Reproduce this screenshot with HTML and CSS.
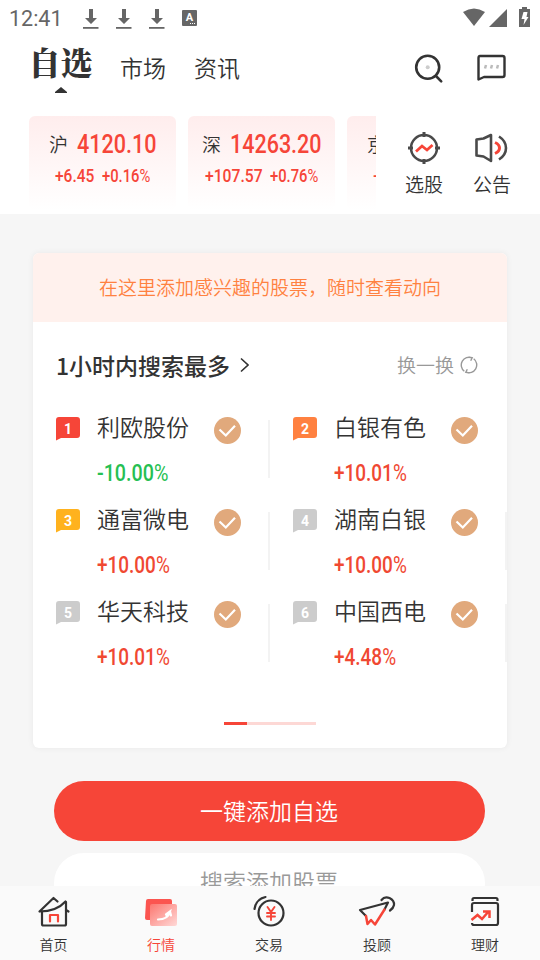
FILE: index.html
```html
<!DOCTYPE html>
<html lang="zh-CN">
<head>
<meta charset="utf-8">
<title>自选</title>
<link rel="stylesheet" href="styles.css">
</head>
<body>
<svg class="defs" width="0" height="0">
  <symbol id="dl" viewBox="0 0 16 20"><path d="M6 0h4v9h4l-6 6-6-6h4z"/><path d="M0 18h15.500v1.800H0z"/></symbol>
  <symbol id="flag" viewBox="0 0 24 24"><path d="M3 0h18a3 3 0 0 1 3 3v15a3 3 0 0 1-3 3H5l-5 2.500V3a3 3 0 0 1 3-3z"/></symbol>
  <symbol id="check" viewBox="0 0 27 27"><circle cx="13.500" cy="13.500" r="13.500" fill="#e1a97c"/><path d="M5.500 12.500l6.300 6 9.200-9.700" fill="none" stroke="#fff" stroke-width="2.200"/></symbol>
</svg>
<div class="screen">
  <header class="top">
    <div class="status">
      <span class="clock">12:41</span>
      <svg class="dl" width="16" height="20"><use href="#dl"/></svg>
      <svg class="dl" width="16" height="20"><use href="#dl"/></svg>
      <svg class="dl" width="16" height="20"><use href="#dl"/></svg>
      <span class="lang">A<i></i></span>
      <span class="grow"></span>
      <svg width="71" height="22" viewBox="0 0 71 22" fill="#666">
        <path d="M3 5Q14-2 25 5L14 19z"/><path d="M47 2v18H29z"/>
        <path d="M59 2h3V0h5v2h3v18H59z"/><path d="M63.500 5h4l-1 5h2l-5 8 1-6h-3z" fill="#fff"/>
      </svg>
    </div>
    <div class="tabs">
      <div class="tab active"><span>自选</span><svg width="12" height="6" viewBox="0 0 12 6"><path d="M6 0l6 5v1H0V5z" fill="#333"/></svg></div>
      <div class="tab second">市场</div>
      <div class="tab third">资讯</div>
      <span class="grow"></span>
      <svg class="search" width="30" height="30" viewBox="0 0 30 30" fill="none" stroke="#333" stroke-width="2.600" stroke-linecap="round"><circle cx="13.700" cy="13.200" r="11.500"/><path d="M22 22l5.200 5.300"/><circle cx="13.700" cy="13.200" r="2" fill="#ccc" stroke="none"/></svg>
      <svg class="chat" width="30" height="28" viewBox="0 0 30 28" fill="none" stroke="#333" stroke-width="2.400"><path d="M4 2h22.500q2 0 2 2v17q0 2-2 2H8l-5.500 2.500V4q0-2 1.500-2z" stroke-linejoin="round"/><path d="M9 14.500l1-3.500M15 14.500l1-3.500M21 14.500l1-3.500" stroke="#bbb" stroke-width="2.500"/></svg>
    </div>
    <div class="market">
      <div class="indices">
        <div class="index">
          <div class="line"><span class="mk">沪</span><b style="width:79px"><span style="transform:scaleX(.83)">4120.10</span></b></div>
          <div class="sub"><b style="width:39px"><span style="transform:scaleX(.86)">+6.45</span></b><b style="width:48px"><span style="transform:scaleX(.82)">+0.16<em>%</em></span></b></div>
        </div>
        <div class="index">
          <div class="line"><span class="mk">深</span><b style="width:91px"><span style="transform:scaleX(.827)">14263.20</span></b></div>
          <div class="sub"><b style="width:57px"><span style="transform:scaleX(.87)">+107.57</span></b><b style="width:48px"><span style="transform:scaleX(.82)">+0.76<em>%</em></span></b></div>
        </div>
        <div class="index cut">
          <div class="line"><span class="mk">京</span></div>
          <div class="sub"><b><span>-</span></b></div>
        </div>
      </div>
      <div class="tool pick">
        <svg width="34" height="34" viewBox="0 0 34 34" fill="none" stroke="#4a4a4a" stroke-width="2.500"><circle cx="17" cy="17" r="13"/><path d="M17 1v5M17 28v5M1 17h5M28 17h5" stroke-width="3"/><path d="M9 20.500l6-5.500 5 4 5.500-5" stroke="#f64538" stroke-width="2.800"/></svg>
        <span>选股</span>
      </div>
      <div class="tool horn">
        <svg width="34" height="34" viewBox="0 0 34 34" fill="none" stroke="#4a4a4a" stroke-width="2.600"><path d="M2.500 8.500l7-1L17 4v26l-7.500-4.500-7-1z" stroke-linejoin="round"/><path d="M25 5.500q7 4.500 7 11.500t-7 11.500"/><path d="M21 11.500q4.500 2 4.500 5.500T21 22.500" stroke="#f64538" stroke-width="3"/></svg>
        <span>公告</span>
      </div>
    </div>
  </header>

  <main class="main">
    <section class="card">
      <div class="banner">在这里添加感兴趣的股票，随时查看动向</div>
      <div class="head">
        <h2>1小时内搜索最多</h2>
        <svg width="9" height="16" viewBox="0 0 9 16" fill="none" stroke="#333" stroke-width="1.600"><path d="M1 1.500l7 6.500-7 6.500"/></svg>
        <span class="grow"></span>
        <span class="swap">换一换</span>
        <svg width="18" height="18" viewBox="0 0 18 18" fill="none" stroke="#999" stroke-width="1.400"><path d="M4.300 15.200A7.800 7.800 0 0 1 12 1.800M13.700 2.800A7.800 7.800 0 0 1 6 16.200M8.500 1l3.700.8-1.500 3M9.500 17l-3.700-.8 1.500-3"/></svg>
      </div>
      <div class="stocks">
        <div class="stock"><div class="badge c1"><svg><use href="#flag"/></svg><span>1</span></div><div class="info"><div>利欧股份</div><p class="down"><span>-10.00<em>%</em></span></p></div><svg class="check"><use href="#check"/></svg><i class="rule"></i></div>
        <div class="stock"><div class="badge c2"><svg><use href="#flag"/></svg><span>2</span></div><div class="info"><div>白银有色</div><p><span>+10.01<em>%</em></span></p></div><svg class="check"><use href="#check"/></svg></div>
        <div class="stock"><div class="badge c3"><svg><use href="#flag"/></svg><span>3</span></div><div class="info"><div>通富微电</div><p><span>+10.00<em>%</em></span></p></div><svg class="check"><use href="#check"/></svg><i class="rule"></i></div>
        <div class="stock"><div class="badge"><svg><use href="#flag"/></svg><span>4</span></div><div class="info"><div>湖南白银</div><p><span>+10.00<em>%</em></span></p></div><svg class="check"><use href="#check"/></svg><i class="rule"></i></div>
        <div class="stock"><div class="badge"><svg><use href="#flag"/></svg><span>5</span></div><div class="info"><div>华天科技</div><p><span>+10.01<em>%</em></span></p></div><svg class="check"><use href="#check"/></svg><i class="rule"></i></div>
        <div class="stock"><div class="badge"><svg><use href="#flag"/></svg><span>6</span></div><div class="info"><div>中国西电</div><p><span>+4.48<em>%</em></span></p></div><svg class="check"><use href="#check"/></svg><i class="rule"></i></div>
      </div>
      <div class="pager"><i></i></div>
    </section>
    <div class="btn primary">一键添加自选</div>
    <div class="btn">搜索添加股票</div>
  </main>

  <nav class="nav">
    <div class="item"><svg width="34" height="34" viewBox="0 0 34 34" fill="none" stroke="#333" stroke-width="2.200" stroke-linejoin="round" stroke-linecap="round"><path d="M5 18v12q0 1.500 1.500 1.500h21q1.500 0 1.500-1.500V8"/><path d="M2.500 17.500L16.500 4l4 3.500M2.500 17.500q17 0 26-10M29 16l2.500 1.500"/><path d="M13 27.500V21h8v6.500" stroke="#f64538"/></svg><span>首页</span></div>
    <div class="item on"><svg width="34" height="34" viewBox="0 0 34 34"><defs><linearGradient id="g" x1="0" y1="0" x2="1" y2="1"><stop offset="0" stop-color="#fc7770"/><stop offset="1" stop-color="#ffd9d7"/></linearGradient></defs><path d="M4 5h22q2 0 2 2v19H3q-2 0-2-2L2 7q0-2 2-2z" fill="#fb5550"/><rect x="6" y="10" width="27" height="22" rx="2" fill="url(#g)"/><path d="M14 25.500q10 0 12-8l-4 3M26 17.500l1 4" fill="none" stroke="#fff" stroke-width="2.200" stroke-linecap="round"/></svg><span>行情</span></div>
    <div class="item"><svg width="34" height="34" viewBox="0 0 34 34" fill="none" stroke="#333" stroke-width="2.200" stroke-linecap="round"><circle cx="19" cy="19" r="12.500"/><path d="M2.500 15Q4 5 13.500 3"/><path d="M15.500 13l3.500 5 3.500-5M19 18v8M15 19h8M15 22.500h8" stroke="#f64538" stroke-width="1.900"/></svg><span>交易</span></div>
    <div class="item"><svg width="38" height="34" viewBox="0 0 38 34" fill="none" stroke="#333" stroke-width="2.200" stroke-linejoin="round" stroke-linecap="round"><path d="M8 22l-6-6 28-7.500-3.500 7"/><path d="M8 22l1.500 8 3.500-4 4 4.500L26.500 15.500" stroke="#f64538" stroke-width="2.500"/><path d="M23.500 6q3-4 8-2 5 2.500 4.500 7-.5 3-4 5.500"/></svg><span>投顾</span></div>
    <div class="item"><svg width="34" height="34" viewBox="0 0 34 34" fill="none" stroke="#333" stroke-width="2.200" stroke-linejoin="round"><path d="M4.500 7V5.500Q4.500 4 6 4h22q1.500 0 1.500 1.500V7M4 18V11q0-2 2-2h22q2 0 2 2v18q0 2-2 2H6q-2 0-2-2"/><path d="M3.500 26l6-5 4.500 4 7-8M15 17.500h6.500V24" stroke="#f64538" stroke-width="2.500" stroke-linejoin="miter"/></svg><span>理财</span></div>
  </nav>
</div>
</body>
</html>
```
FILE: styles.css
```css
* { box-sizing: border-box; }
body { margin: 0; color: #333; font-family: "Noto Sans CJK SC", sans-serif; font-weight: 350; }
.defs { position: absolute; }
svg { display: block; flex: none; }
em, i { font-style: normal; }
.grow { flex: 1; }
.screen { width: 540px; height: 960px; overflow: hidden; display: flex; flex-direction: column; background: #f6f6f6; }

.top { flex: none; height: 214px; background: #fff; }
.status { height: 38px; display: flex; align-items: flex-start; padding: 7px 9px 0 9px; }
.clock { width: 74px; font: 400 21.500px/24px Roboto, sans-serif; color: #666; }
.dl { margin: 2px 17px 0 0; fill: #666; }
.lang { width: 15px; height: 16px; margin-top: 3px; background: #666; border-radius: 1px; color: #fff; font: 700 11px/15px Roboto, sans-serif; text-align: center; display: grid; grid-template-rows: 13px 1px; }
.lang i { width: 6px; height: 1px; margin-left: 8px; background: repeating-linear-gradient(90deg, #fff 0 1px, #666 1px 2px); }

.tabs { height: 78px; display: flex; padding: 6px 34px 0 30px; }
.tab { font-size: 23px; line-height: 46px; white-space: nowrap; }
.tab.active { width: 61px; display: flex; flex-direction: column; align-items: center; font: 900 32px/43px "Noto Serif CJK SC", "Noto Sans CJK SC", serif; }
.tab.active span { margin: -4px 0 4px; }
.tab.second { margin-left: 29px; }
.tab.third { margin-left: 28px; }
.search { margin: 10px 0 0; }
.chat { margin: 10px 0 0 32px; }

.market { height: 98px; display: flex; padding-left: 29px; }
.indices { width: 347px; display: flex; gap: 12px; overflow: hidden; }
.index { flex: none; width: 147px; height: 94px; border-radius: 6px; background: linear-gradient(#ffeded, #fff); padding-top: 12px; }
.line, .sub { display: flex; justify-content: center; gap: 9px; height: 32px; line-height: 32px; }
.mk { font-size: 19px; }
b { display: block; color: #f64538; font: 500 26px/33px Roboto, sans-serif; white-space: nowrap; }
b span { display: inline-block; transform-origin: 0 50%; }
.sub { gap: 8px; }
.sub b { font-size: 18px; line-height: 32px; }
em { font-weight: 400; }
.cut .line { justify-content: flex-start; padding-left: 20px; }
.cut .sub { justify-content: flex-start; padding-left: 26px; }
.tool { width: 38px; display: flex; flex-direction: column; align-items: center; padding-top: 15px; font-size: 19px; line-height: 38px; }
.tool.pick { margin: 0 30px 0 29px; }
.horn svg { margin: 0 1px 0 -1px; }

.main { flex: 1; min-height: 0; overflow: hidden; padding: 39px 33px 0; }
.card { height: 495px; border-radius: 6px; overflow: hidden; background: #fff; box-shadow: 0 0 6px rgba(0, 0, 0, .06); }
.banner { height: 69px; background: #fff1ed; color: #ff8140; font-size: 19px; line-height: 67px; text-align: center; }
.head { height: 88px; display: flex; align-items: center; padding: 0 29px 0 23px; }
.head h2 { margin: -2px 10px 0 0; font-size: 23px; font-weight: 500; line-height: 36px; }
.swap { margin: -4px 6px 0 0; color: #999; font-size: 19px; }
.head svg { margin-top: -2px; }
.stocks { display: grid; grid-template-columns: 237px 237px; grid-auto-rows: 92px; height: 312px; }
.stock { display: flex; padding: 7px 0 0 23px; }
.badge { width: 24px; height: 24px; display: grid; fill: #ccc; }
.badge > * { grid-area: 1 / 1; width: 24px; height: 24px; }
.badge span { color: #fff; font: 700 14px/24px Roboto, sans-serif; text-align: center; }
.c1 { fill: #f64538; }
.c2 { fill: #ff8140; }
.c3 { fill: #ffb21e; }
.info { width: 92px; margin: -8px 25px 0 17px; font-size: 23px; line-height: 34px; }
.info p { margin: 10px 0 0; color: #f04832; font: 500 24px/40px Roboto, sans-serif; }
.info p span { display: inline-block; transform: scaleX(.79); transform-origin: 0 50%; }
.info p.down { color: #26bf53; }
.info p.down span { transform: scaleX(.82); }
.check { width: 27px; height: 27px; }
.rule { width: 2px; height: 58px; margin: 3px 0 0 27px; background: #f3f3f3; }
.pager { width: 92px; height: 3px; margin: 0 auto; background: #fdd8d5; }
.pager i { display: block; width: 23px; height: 3px; background: #f64538; }
.btn { width: 431px; height: 60px; margin: 12px 0 0 21px; padding-right: 1px; border-radius: 30px; background: #fff; color: #999; font-size: 23px; line-height: 57px; text-align: center; }
.btn.primary { margin-top: 33px; background: #f64538; color: #fff; line-height: 58px; }

.nav { flex: none; height: 74px; display: grid; grid-template-columns: 107px repeat(4, 108px); background: #fafafa; }
.item { display: flex; flex-direction: column; align-items: center; padding-top: 8px; font-size: 14px; line-height: 32px; }
.on { color: #f64538; }
```
